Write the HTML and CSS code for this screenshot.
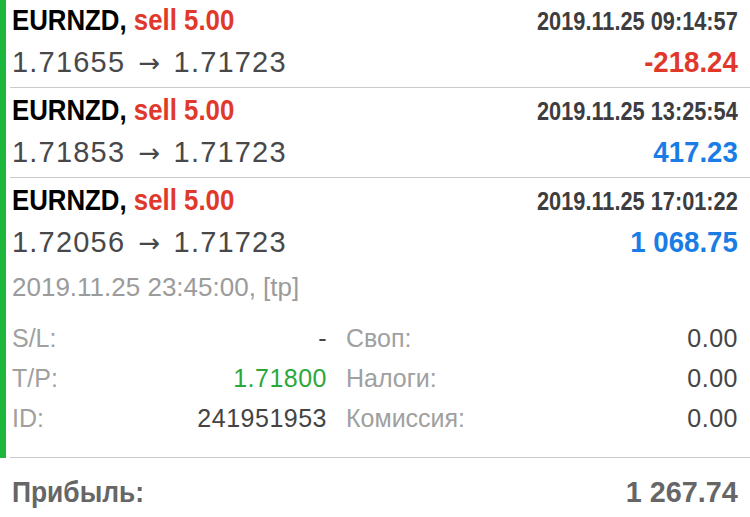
FILE: index.html
```html
<!DOCTYPE html>
<html lang="ru">
<head>
  <meta charset="UTF-8" />
  <meta name="viewport" content="width=device-width, initial-scale=1.0">
  <title>История сделок</title>
  <link rel="stylesheet" href="styles.css">
</head>
<body>
  <div class="trades">
    <div class="trade first">
      <div class="line">
        <span class="symbol">EURNZD, <span class="side">sell 5.00</span></span>
        <span class="time">2019.11.25 09:14:57</span>
      </div>
      <div class="line lower">
        <span class="price">1.71655 <span class="arrow">→</span> 1.71723</span>
        <span class="profit loss">-218.24</span>
      </div>
    </div>

    <div class="trade">
      <div class="line">
        <span class="symbol">EURNZD, <span class="side">sell 5.00</span></span>
        <span class="time">2019.11.25 13:25:54</span>
      </div>
      <div class="line lower">
        <span class="price">1.71853 <span class="arrow">→</span> 1.71723</span>
        <span class="profit gain">417.23</span>
      </div>
    </div>

    <div class="trade open">
      <div class="line">
        <span class="symbol">EURNZD, <span class="side">sell 5.00</span></span>
        <span class="time">2019.11.25 17:01:22</span>
      </div>
      <div class="line lower">
        <span class="price">1.72056 <span class="arrow">→</span> 1.71723</span>
        <span class="profit gain">1 068.75</span>
      </div>

      <!-- expanded details -->
      <div class="closed">2019.11.25 23:45:00, [tp]</div>
      <div class="details">
        <div class="pair"><span class="label">S/L:</span><span class="value">-</span></div>
        <div class="pair"><span class="label">Своп:</span><span class="value">0.00</span></div>
        <div class="pair"><span class="label">T/P:</span><span class="value tp">1.71800</span></div>
        <div class="pair"><span class="label">Налоги:</span><span class="value">0.00</span></div>
        <div class="pair"><span class="label">ID:</span><span class="value">241951953</span></div>
        <div class="pair"><span class="label">Комиссия:</span><span class="value">0.00</span></div>
      </div>
    </div>
  </div>

  <div class="summary">
    <span class="total-label">Прибыль:</span>
    <span class="total-value">1 267.74</span>
  </div>
</body>
</html>
```

FILE: styles.css
```css
/* Reset and base */
* {
  margin: 0;
  padding: 0;
  box-sizing: border-box;
}

body {
  width: 750px;
  font-family: "Liberation Sans", Arial, sans-serif;
  background: #fff;
  color: #444;
  overflow: hidden;
}

.trades {
  border-left: 6px solid #1db73c;
}

.trade {
  margin-left: 4px;
  padding: 5px 12px 6px 2px;
  height: 90px;
  border-bottom: 1px solid #cacaca;
}

.trade.first {
  height: 88px;
  padding-top: 3px;
}

.trade.open {
  height: 280px;
}

.line {
  display: flex;
  justify-content: space-between;
  align-items: baseline;
  height: 34px;
}

.line.lower {
  height: 36px;
  margin-top: 8px;
}

/* bold texts, squeezed to look condensed */
.symbol,
.time,
.profit,
.summary {
  font-weight: 700;
  display: inline-block;
  white-space: nowrap;
}

.symbol {
  font-size: 30px;
  color: #000;
  transform: scaleX(0.86);
  transform-origin: left center;
}

.side {
  color: #e0392c;
}

.time {
  font-size: 25px;
  color: #3d3d3f;
  transform: scaleX(0.87);
  transform-origin: right center;
}

.price {
  font-size: 29px;
  color: #48484a;
  letter-spacing: 1.2px;
  white-space: nowrap;
}

.arrow {
  font-family: "DejaVu Sans", sans-serif;
  font-size: 26px;
  letter-spacing: 0;
  margin: 0 4px;
}

.profit {
  font-size: 30px;
  transform: scaleX(0.92);
  transform-origin: right center;
}

.loss {
  color: #e0392c;
}

.gain {
  color: #1a7de5;
}

.closed {
  margin-top: 10px;
  font-size: 26px;
  line-height: 32px;
  color: #9b9b9b;
}

.details {
  display: grid;
  grid-template-columns: 315px 1fr;
  column-gap: 19px;
  margin-top: 15px;
}

.pair {
  display: flex;
  justify-content: space-between;
  font-size: 25px;
  line-height: 40px;
}

.label {
  color: #a0a0a0;
}

.value {
  color: #444;
  letter-spacing: 0.5px;
}

.value.tp {
  color: #2ba83a;
}

.summary {
  display: flex;
  justify-content: space-between;
  padding: 16px 12px 0 12px;
  font-size: 30px;
  line-height: 36px;
  color: #666;
}

.total-label {
  display: inline-block;
  transform: scaleX(0.88);
  transform-origin: left center;
}

.total-value {
  display: inline-block;
  transform: scaleX(0.96);
  transform-origin: right center;
}
```
